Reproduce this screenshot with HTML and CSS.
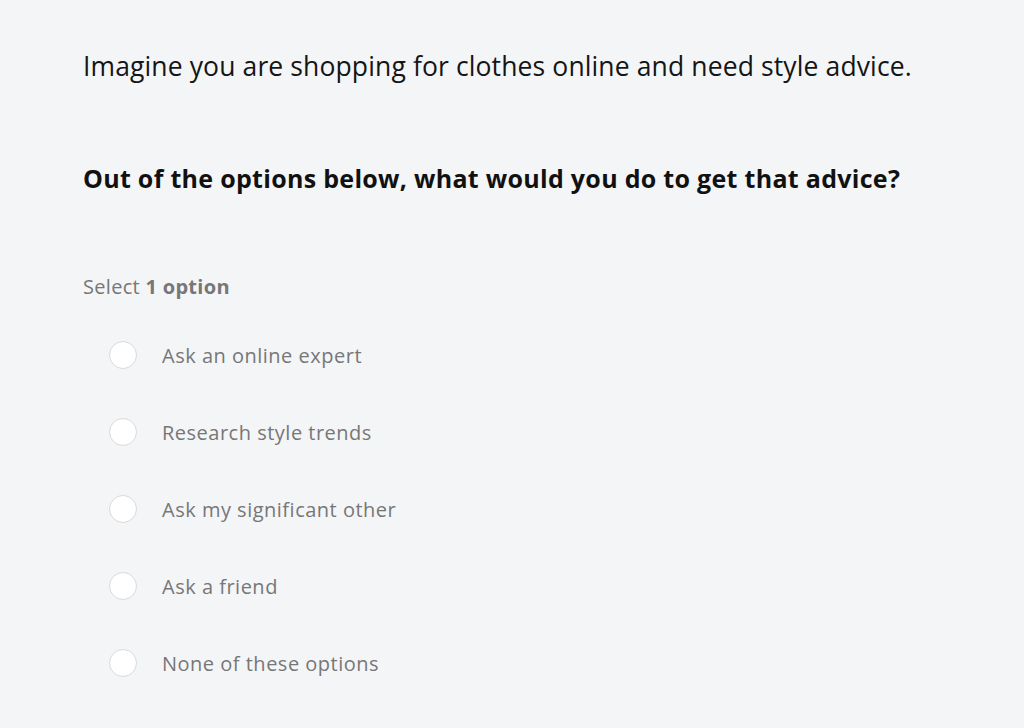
FILE: index.html
```html
<!DOCTYPE html>
<html lang="en">
<head>
<meta charset="utf-8">
<link rel="stylesheet" href="styles.css">
</head>
<body>
<main class="survey">
  <p class="intro">Imagine you are shopping for clothes online and need style advice.</p>
  <h1 class="question">Out of the options below, what would you do to get that advice?</h1>
  <p class="hint">Select <b>1 option</b></p>
  <ul class="options">
    <li class="option"><span class="radio"></span><span class="label">Ask an online expert</span></li>
    <li class="option"><span class="radio"></span><span class="label">Research style trends</span></li>
    <li class="option"><span class="radio"></span><span class="label">Ask my significant other</span></li>
    <li class="option"><span class="radio"></span><span class="label">Ask a friend</span></li>
    <li class="option"><span class="radio"></span><span class="label">None of these options</span></li>
  </ul>
</main>
</body>
</html>
```
FILE: styles.css
```css
html, body {
  margin: 0;
  padding: 0;
  background: #f4f5f7;
}
body {
  font-family: "Open Sans", "Lato", sans-serif;
  color: #111;
}
.survey {
  padding: 48px 0 0 83px;
}
.intro {
  margin: 0;
  font-size: 26.5px;
  line-height: 36px;
  letter-spacing: 0.12px;
  color: #151515;
}
.question {
  margin: 77px 0 0;
  font-size: 25px;
  line-height: 34px;
  letter-spacing: 0.3px;
  font-weight: 700;
  color: #111;
}
.hint {
  margin: 79px 0 0;
  font-size: 20px;
  line-height: 26px;
  letter-spacing: 0.3px;
  color: #777;
}
.hint b {
  font-weight: 700;
}
.options {
  list-style: none;
  margin: 41px 0 0;
  padding: 0 0 0 26px;
  display: flex;
  flex-direction: column;
  gap: 49px;
}
.option {
  display: flex;
  align-items: center;
  height: 28px;
}
.radio {
  width: 26px;
  height: 26px;
  border: 1px solid #d9d9d9;
  border-radius: 50%;
  background: #fff;
  flex: none;
}
.label {
  margin-left: 25px;
  font-size: 20px;
  letter-spacing: 0.5px;
  color: #777;
}
```
